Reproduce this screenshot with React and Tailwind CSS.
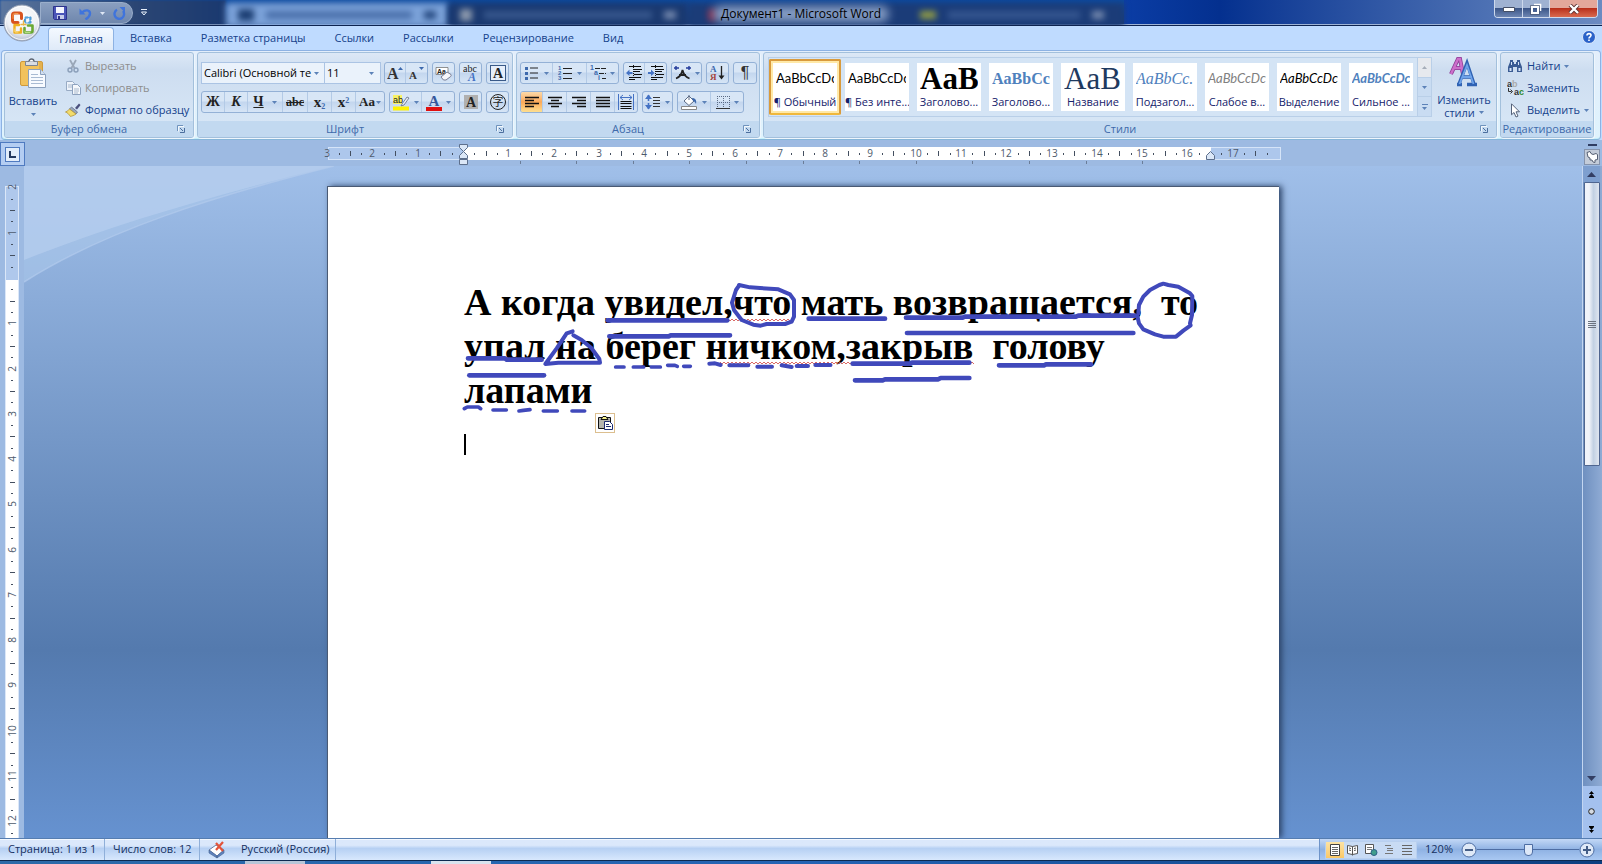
import React from "react";

const UI = "font-['Open_Sans','Noto_Sans',sans-serif]";

/* ---------- small shared parts ---------- */

function Caret({ className = "" }) {
  return (
    <svg width="5" height="3" viewBox="0 0 5 3" className={"shrink-0 " + className} aria-hidden="true">
      <path d="M0 0h5L2.500 3z" fill="#5c82b8" />
    </svg>
  );
}

function Launcher({ label }) {
  return (
    <button type="button" aria-label={label} className="absolute right-1 top-0 flex h-4 w-4 items-center justify-center">
      <svg width="8" height="8" viewBox="0 0 8 8" fill="none" aria-hidden="true">
        <path d="M.5 6V.5H6" stroke="#6f93bd" />
        <path d="M3 3l3 3" stroke="#4c6f9e" />
        <path d="M7.500 3v4.500H3" stroke="#4c6f9e" />
        <path d="M1.500 6.500V1.500H7" stroke="#fff" opacity=".8" />
      </svg>
    </button>
  );
}

function Group({ title, className = "", launcher, children }) {
  return (
    <section
      aria-label={title}
      className={
        "flex h-[86px] flex-col overflow-hidden rounded-[3px] border border-[#a3c0dc] bg-linear-to-b from-[#dce8f6] via-[#cdddf0] via-20% to-[#d9e8f7] shadow-[1px_1px_0_#eef6fd] " +
        className
      }
    >
      <div className="flex min-h-0 flex-1">{children}</div>
      <div className={"relative flex h-4 shrink-0 items-center justify-center bg-[#c2d9f0] text-[11px] text-[#3e6aaa] " + (launcher ? "pr-5" : "")}>
        <span className="whitespace-nowrap">{title}</span>
        {launcher && <Launcher label={launcher} />}
      </div>
    </section>
  );
}

function Strip({ children }) {
  return (
    <div className="flex h-[22px] shrink-0 divide-x divide-[#b3cae6] overflow-hidden rounded-[3px] border border-[#94b1d6] bg-linear-to-b from-[#d8e6f6] from-45% via-[#c3d6ee] via-50% to-[#d6e5f6]">
      {children}
    </div>
  );
}

function Tool({ label, w = "flex-1", caret, active, children }) {
  return (
    <button
      type="button"
      aria-label={label}
      className={
        "flex h-full items-center justify-center gap-1 " +
        w +
        (active ? " bg-linear-to-b from-[#fbd9a8] via-[#fba958] to-[#fddf90]" : "")
      }
    >
      {children}
      {caret && <Caret />}
    </button>
  );
}

/* ---------- icons ---------- */

const Svg = ({ w = 16, h = 16, children }) => (
  <svg width={w} height={h} viewBox={`0 0 ${w} ${h}`} fill="none" aria-hidden="true" className="shrink-0">
    {children}
  </svg>
);

const OfficeLogo = () => (
  <svg width="38" height="38" viewBox="0 0 38 38" aria-hidden="true">
    <defs>
      <radialGradient id="orb" cx=".5" cy=".35" r=".7">
        <stop offset="0" stopColor="#fff" />
        <stop offset=".6" stopColor="#eef0f5" />
        <stop offset="1" stopColor="#a4afc3" />
      </radialGradient>
    </defs>
    <circle cx="19" cy="19" r="18" fill="url(#orb)" stroke="#8f9bb0" />
    <circle cx="19" cy="19" r="16.500" fill="none" stroke="#fff" opacity=".8" />
    <g fill="none" strokeLinecap="round" strokeLinejoin="round">
      <path d="M15 18.500H11.500Q9.500 18.500 9.500 16.500V11Q9.500 9 11.500 9H16.500Q18.500 9 18.500 11V14.500" stroke="#d8541f" strokeWidth="3" />
      <path d="M10 14.500V11Q10 9.500 11.500 9.500H15" stroke="#f39a4c" strokeWidth="1" />
      <path d="M22 17.500V13.500H27.500V18.500H25" stroke="#3d8fd0" strokeWidth="2" strokeDasharray="2 2.600" />
      <path d="M22.500 19V13.500H27V19H23" stroke="#57a5dd" strokeWidth="1.200" />
      <path d="M16 21H11.500V28.500H18V24.500" stroke="#eeb021" strokeWidth="2.400" />
      <path d="M12 25V28H15" stroke="#fbe08a" strokeWidth="1" />
      <path d="M21.500 24V28.500H28Q29.500 28.500 29.500 27V21.500H25" stroke="#69a832" strokeWidth="2.600" />
      <path d="M22 27V28.500H27" stroke="#b5dd7f" strokeWidth="1" />
      <path d="M20.500 17v4M18 20.500h5" stroke="#e9b544" strokeWidth="1.400" />
    </g>
  </svg>
);

const SaveIcon = () => (
  <Svg w={14} h={14}>
    <path d="M.5.5h13v13h-12l-1-1z" fill="#4a55b8" stroke="#2d348c" />
    <path d="M3 1h8v6H3z" fill="#f4f6ff" />
    <path d="M4 9h7v4H4z" fill="#c6ccea" />
    <path d="M5 10h2v3H5z" fill="#2d348c" />
  </Svg>
);
const UndoIcon = () => (
  <Svg w={13} h={13}>
    <path d="M3 5.500C6 2.500 11 2.500 11 6.500c0 3-2.500 4.500-4.500 6" stroke="#3f74dc" strokeWidth="2.400" />
    <path d="M.5 1.500v6h6z" fill="#3f74dc" />
  </Svg>
);
const RedoIcon = () => (
  <Svg w={13} h={13}>
    <path d="M4 2.800A4.800 4.800 0 1 0 10 4" stroke="#3f74dc" strokeWidth="2.400" />
    <path d="M6.500 0H12v5.500z" fill="#3f74dc" />
  </Svg>
);

const PasteIcon = () => (
  <svg width="28" height="32" viewBox="0 0 28 32" fill="none" aria-hidden="true">
    <rect x="1.500" y="4.500" width="22" height="24" rx="1.500" fill="#f2c25c" stroke="#cf9a3c" />
    <path d="M20 5h3v23h-3z" fill="#dba544" opacity=".6" />
    <path d="M6.500 4.500h12v4h-12z" fill="#d9dde4" stroke="#7c8594" />
    <path d="M10 4.500a2.500 2.500 0 0 1 5 0" fill="#fff" stroke="#5f6876" strokeWidth="1.300" />
    <path d="M9.500 12.500h12l5 5v13h-17z" fill="#f8fbff" stroke="#8ba0bd" />
    <path d="M21.500 12.500v5h5" fill="#d3e0f0" stroke="#8ba0bd" />
    <path d="M12 17.500h7M12 20.500h12M12 23.500h12M12 26.500h12" stroke="#a9bbd3" />
  </svg>
);
const CutIcon = () => (
  <Svg w={14} h={14}>
    <path d="M4 1l4.500 8M10 1L5.500 9" stroke="#9aa7b8" strokeWidth="1.800" />
    <circle cx="4" cy="11" r="2" stroke="#8b9fb9" strokeWidth="1.400" />
    <circle cx="10" cy="11" r="2" stroke="#8b9fb9" strokeWidth="1.400" />
  </Svg>
);
const CopyIcon = () => (
  <Svg w={15} h={14}>
    <path d="M.5.5h6l2 2v7h-8z" fill="#eef3fa" stroke="#98abc4" />
    <path d="M2 4h4M2 6h4" stroke="#a9b9cd" />
    <path d="M6.500 3.500h5l3 3v7h-8z" fill="#f5f8fc" stroke="#8da2bf" />
    <path d="M8 8h5M8 10h5M8 12h4" stroke="#a9b9cd" />
  </Svg>
);
const BrushIcon = () => (
  <Svg w={16} h={14}>
    <path d="M10 5l4-4.500 1.500 1.500L12 6.500z" fill="#4a4f7d" />
    <path d="M6.500 4l6 5-1.500 2-6.500-5z" fill="#9aa6ba" stroke="#66718a" strokeWidth=".8" />
    <path d="M4.500 6l6.500 5c-2 1.500-4 2-5.500 2.500C4 11.500 2.500 9.500.5 9 2 8.500 3.500 7.500 4.500 6z" fill="#f3dc6b" stroke="#b3953a" strokeWidth=".8" />
  </Svg>
);

const TextIcon = ({ children, className = "text-[15px]" }) => (
  <span className={"font-['Liberation_Serif',serif] leading-4 text-[#222] " + className}>{children}</span>
);

const GrowA = ({ small }) => (
  <Svg w={16}>
    <text x="0" y="14" fontFamily="Liberation Serif, serif" fontWeight="bold" fontSize={small ? 11 : 16} fill="#333">
      A
    </text>
    {small ? <path d="M10 2h5l-2.500 3z" fill="#3d69ad" /> : <path d="M11 5h5l-2.500-3z" fill="#3d69ad" />}
  </Svg>
);
const ClearIcon = () => (
  <Svg w={17}>
    <path d="M1 2.500h12v7H1z" fill="#fff" stroke="#777" strokeWidth=".8" />
    <text x="2" y="9" fontFamily="Liberation Sans, sans-serif" fontSize="7" fontWeight="bold" fill="#222">
      Aa
    </text>
    <path d="M6 12l6-5 4 2.500c.5 1 0 2-1 2.500l-4 3H8.500z" fill="#f7f7fb" stroke="#777c93" />
  </Svg>
);
const PhoneticIcon = () => (
  <Svg w={16} h={18}>
    <text x="0" y="8" fontFamily="Liberation Serif, serif" fontSize="10" fill="#222">abc</text>
    <text x="5" y="17" fontFamily="Liberation Serif, serif" fontStyle="italic" fontWeight="bold" fontSize="12" fill="#4472c4">A</text>
  </Svg>
);
const BoxA = ({ shaded }) => (
  <Svg w={16} h={16}>
    {shaded ? <rect x="1" y="1" width="14" height="14" fill="#b0b0b0" /> : <rect x=".5" y=".5" width="15" height="15" fill="#e6eefa" stroke="#3a5a88" />}
    <text x="8" y="13" textAnchor="middle" fontFamily="Liberation Serif, serif" fontWeight="bold" fontSize="14" fill="#222">A</text>
  </Svg>
);
const CircleChar = () => (
  <Svg w={18} h={18}>
    <circle cx="9" cy="9" r="7.500" stroke="#222" />
    <text x="9" y="13" textAnchor="middle" fontFamily="Noto Sans CJK SC, sans-serif" fontSize="11" fill="#222">字</text>
  </Svg>
);
const HighlightIcon = () => (
  <Svg w={17} h={17}>
    <path d="M0 1h9v9H0z" fill="#f7f265" />
    <text x="0" y="9" fontFamily="Liberation Sans, sans-serif" fontSize="9" fill="#222">ab</text>
    <path d="M9 10l5-7 2 1-5 7-3 1z" fill="#e8edf6" stroke="#5f6c82" strokeWidth=".8" />
    <path d="M0 12.500h16v4H0z" fill="#fff200" />
  </Svg>
);
const FontColorIcon = () => (
  <Svg w={16} h={17}>
    <text x="8" y="12" textAnchor="middle" fontFamily="Liberation Serif, serif" fontWeight="bold" fontSize="15" fill="#35589c">A</text>
    <path d="M0 13h16v4H0z" fill="#e01010" />
  </Svg>
);

const ListIcon = ({ kind }) => (
  <Svg w={16}>
    {kind === "bullet" && (
      <>
        <path d="M6 3h8M6 8h8M6 13h8" stroke="#222" />
        <path d="M1 2h3v3H1zM1 7h3v3H1zM1 12h3v3H1z" fill="#3d69ad" />
      </>
    )}
    {kind === "number" && (
      <>
        <path d="M6 3.500h9M6 8.500h9M6 13.500h9" stroke="#222" />
        <g fontFamily="Liberation Sans, sans-serif" fontWeight="bold" fontSize="6" fill="#3d69ad">
          <text x="1" y="5">1</text>
          <text x="1" y="10">2</text>
          <text x="1" y="15">3</text>
        </g>
      </>
    )}
    {kind === "multi" && (
      <>
        <path d="M5 3.500h11M9 8.500h7M12 13.500h4" stroke="#222" strokeDasharray="5 1" />
        <g fontFamily="Liberation Sans, sans-serif" fontWeight="bold" fontSize="7" fill="#3d69ad">
          <text x="0" y="5">1</text>
          <text x="4" y="10">a</text>
          <text x="8" y="15">i</text>
        </g>
      </>
    )}
  </Svg>
);
const IndentIcon = ({ right }) => (
  <Svg w={16}>
    <path d="M3 1.500h12M8 4.500h8M8 6.500h6M8 9.500h8M3 12.500h12M3 14.500h6" stroke="#111" />
    <path d="M7.500 0v16" stroke="#111" strokeDasharray="1 1" />
    {right ? <path d="M0 7h3V4.500L6.500 8 3 11V9H0z" fill="#4472c4" /> : <path d="M6.500 7h-3V4.500L0 8l3.500 3V9h3z" fill="#4472c4" />}
  </Svg>
);
const AsianIcon = () => (
  <Svg w={17}>
    <path d="M2 13.500C6 12 8 8 8.500 5 9.500 9 11 12 15.500 13.500M5 10h7" stroke="#222" strokeWidth="1.800" />
    <path d="M0 3h5M2 1v4M12 3h5M15 1v4" stroke="#223a9a" strokeWidth="1.400" />
  </Svg>
);
const SortIcon = () => (
  <Svg w={15}>
    <text x="0" y="7" fontFamily="Liberation Serif, serif" fontWeight="bold" fontSize="9" fill="#3d69ad">А</text>
    <text x="0" y="15" fontFamily="Liberation Serif, serif" fontWeight="bold" fontSize="9" fill="#a5433c">Я</text>
    <path d="M11.500 1v12" stroke="#222" strokeWidth="1.300" />
    <path d="M8.500 10.500h6l-3 4z" fill="#222" />
  </Svg>
);

const LINES = {
  left: ["M1 2.500h14", "M1 5.500h9", "M1 8.500h14", "M1 11.500h9"],
  center: ["M1 2.500h14", "M4 5.500h8", "M1 8.500h14", "M4 11.500h8"],
  right: ["M1 2.500h14", "M6 5.500h9", "M1 8.500h14", "M6 11.500h9"],
  justify: ["M1 2.500h14", "M1 5.500h14", "M1 8.500h14", "M1 11.500h14"],
};
const AlignIcon = ({ kind }) => (
  <Svg w={16} h={14}>
    <path d={LINES[kind].join("")} stroke="#111" strokeWidth="1.400" />
  </Svg>
);
const DistributeIcon = () => (
  <Svg w={16}>
    <path d="M.5 0v16M15.500 0v16" stroke="#4472c4" />
    <path d="M2 3.500h12" stroke="#4472c4" />
    <path d="M5 1L2 3.500 5 6M11 1l3 2.500L11 6" stroke="#4472c4" />
    <path d="M2.500 7.500h11M2.500 9.500h11M2.500 12.500h11M2.500 14.500h11" stroke="#111" />
  </Svg>
);
const SpacingIcon = () => (
  <Svg w={16}>
    <path d="M3.500 1v14" stroke="#4472c4" strokeDasharray="6 2" strokeWidth="1.600" />
    <path d="M0 5l3.500-4.500L7 5zM0 11l3.500 4.500L7 11z" fill="#4472c4" />
    <path d="M8 3.500h7M8 6.500h7M8 9.500h7M8 12.500h7" stroke="#333" />
  </Svg>
);
const FillIcon = () => (
  <Svg w={17}>
    <path d="M3 7l5-5 5 5-5 4.500z" fill="#fff" stroke="#5b6b85" />
    <path d="M8 6V1" stroke="#5b6b85" />
    <path d="M11 4c3 0 5 2 4 6-1-2-2-3-3-3z" fill="#3d69ad" />
    <path d="M.5 12.500h15v3H.5z" fill="#fff" stroke="#888" />
  </Svg>
);
const BorderIcon = () => (
  <Svg w={14} h={15}>
    <path d="M1 1.500h13M1 7.500h13M1.500 1v12M7.500 1v12M13.500 1v12" stroke="#5b6b85" strokeDasharray="1 1" />
    <path d="M0 13.500h14" stroke="#333" />
  </Svg>
);
const StylesIcon = () => (
  <svg width="30" height="30" viewBox="0 0 30 30" fill="none" aria-hidden="true">
    <path d="M2 17L9 2h2l3 15M5 11h8" stroke="#8d3d96" strokeWidth="4" />
    <path d="M2 17L9 2h2l3 15M5 11h8" stroke="#cc6fca" strokeWidth="2.400" />
    <path d="M8 27.500h5M18 27.500h10M10 27L18 6l7 21M13 20h10" stroke="#2f62b3" strokeWidth="3.400" />
    <path d="M10.500 27L18 8l6.500 19M13 20h10" stroke="#6ea3ea" strokeWidth="1.800" />
  </svg>
);
const FindIcon = () => (
  <Svg w={16} h={14}>
    <path d="M3 1h3v2h1v2h2V3h1V1h3v2l2 5v5h-5V8H6v5H1V8l2-5z" fill="#3b5c94" />
    <path d="M2.500 9h2v3h-2zM11.500 9h2v3h-2zM4 3h1v3H4zM11 3h1v3h-1z" fill="#d7e5f8" />
  </Svg>
);
const ReplaceIcon = () => (
  <Svg w={17} h={16}>
    <text x="0" y="7" fontFamily="Liberation Sans, sans-serif" fontWeight="bold" fontSize="9" fill="#333">a<tspan fill="#aaa">b</tspan></text>
    <text x="7" y="15" fontFamily="Liberation Sans, sans-serif" fontWeight="bold" fontSize="9" fill="#333">a<tspan fill="#2d8a2d">c</tspan></text>
    <path d="M1.500 8v3.500h3M3.500 9.500l2 2-2 2" stroke="#333" />
  </Svg>
);
const SelectIcon = () => (
  <Svg w={12} h={15}>
    <path d="M2.500.8v11l2.500-2.300 2 4.500 2-.9-2-4.300h3.500z" fill="#fff" stroke="#55627a" />
  </Svg>
);

const SpellIcon = () => (
  <Svg w={18} h={18}>
    <path d="M1 9l7-5 8 5-7 6z" fill="#fff" stroke="#6d7fa3" />
    <path d="M1 9v3l8 5v-2zM9 17l7-5V9l-7 6z" fill="#5f83bf" stroke="#44618f" strokeWidth=".6" />
    <path d="M8 2l7 8M15 1L8 9" stroke="#e2533a" strokeWidth="2.200" />
  </Svg>
);
const ViewIcon = ({ kind }) => (
  <Svg w={14} h={12}>
    {kind === "print" && (
      <>
        <path d="M2.500.5h9v11h-9z" fill="#fff" stroke="#444" />
        <path d="M4 3.500h6M4 5.500h6M4 7.500h6M4 9.500h6" stroke="#666" />
      </>
    )}
    {kind === "read" && (
      <>
        <path d="M1.500 1.500l5 1 5-1v8l-5 1-5-1z" fill="#fff" stroke="#555" />
        <path d="M6.500 2.500v9M3 4l2 .5M3 6l2 .5M8 4.500l2-.5M8 6.500l2-.5" stroke="#555" />
      </>
    )}
    {kind === "web" && (
      <>
        <path d="M1.500.5h8v9h-8z" fill="#fff" stroke="#555" />
        <path d="M3 3.500h5M3 5.500h5" stroke="#777" />
        <circle cx="10" cy="8.500" r="3" fill="#3f9d8d" stroke="#2b5f86" />
      </>
    )}
    {kind === "outline" && <path d="M3 1.500h6M5 4.500h6M5 6.500h6M3 9.500h8" stroke="#777" />}
    {kind === "draft" && <path d="M2 1.500h10M2 4.500h10M2 7.500h10M2 10.500h10" stroke="#666" />}
  </Svg>
);

/* ---------- title bar ---------- */

function TitleBar() {
  return (
    <header className="relative flex h-[26px] shrink-0 items-start justify-between overflow-hidden border-b border-[#0d2350] bg-linear-to-b from-[#0b4aa0] to-[#1a3970] shadow-[inset_0_-1px_0_#9fb4d6]">
      <div aria-hidden="true" className="absolute inset-0 mb-px flex">
        <div className="h-full w-[226px] bg-linear-to-r from-[#5b769f] via-[#2b4674] via-60% to-[#1a3970] blur-[1px]" />
        <div className="mt-[3px] flex h-full w-[222px] items-center gap-3 bg-[#7ba2d9] px-3 blur-[3px]">
          <span className="h-3 w-4 bg-[#1d3f74]" />
          <span className="h-2 flex-1 bg-[#4a70ab]" />
          <span className="h-2 w-3 bg-[#24477f]" />
        </div>
        <div className="mt-[3px] flex h-full w-[240px] items-center gap-3 bg-[#1a3970] px-3 blur-[3px]">
          <span className="h-3 w-3 bg-[#8b98ac]" />
          <span className="h-2 flex-1 bg-[#36568c]" />
          <span className="h-2 w-3 bg-[#7488ad]" />
        </div>
        <div className="mt-[3px] flex h-full w-[436px] items-center gap-3 bg-[#1b3c78] px-5 blur-[3px]">
          <span className="h-3 w-2 bg-[#7c2b4d]" />
          <span className="w-[180px]" />
          <span className="h-2 w-4 bg-[#8f9a45]" />
          <span className="h-2 flex-1 bg-[#34558f]" />
          <span className="h-2 w-3 bg-[#7488ad]" />
        </div>
        <div className="h-full flex-1 bg-linear-to-r from-[#0b3da5] via-[#04308f] via-20% to-[#6c8bc2]" />
      </div>
      <div className="relative flex items-start pl-10 pt-[2px]">
        <div className="flex h-[22px] w-[93px] items-center gap-3 rounded-r-full border border-[#9aaecb] bg-linear-to-b from-[#8a9fc0] to-[#6f87ad] pl-3">
          <button type="button" aria-label="Сохранить"><SaveIcon /></button>
          <button type="button" aria-label="Отменить" className="flex items-center gap-2">
            <UndoIcon />
            <svg width="5" height="3" viewBox="0 0 5 3" aria-hidden="true"><path d="M0 0h5L2.500 3z" fill="#dfe8f6" /></svg>
          </button>
          <button type="button" aria-label="Повторить" className="-ml-1"><RedoIcon /></button>
        </div>
        <button type="button" aria-label="Настройка панели быстрого доступа" className="ml-2 mt-[7px]">
          <svg width="6" height="7" viewBox="0 0 6 7" fill="none" aria-hidden="true">
            <path d="M0 .5h6" stroke="#e8f0fb" />
            <path d="M.5 3h5L3 6z" stroke="#e8f0fb" />
          </svg>
        </button>
      </div>
      <h1 className="absolute left-1/2 top-1 -translate-x-1/2 whitespace-nowrap text-[12px] leading-5 text-black">
        <span aria-hidden="true" className="absolute -inset-x-2 inset-y-[2px] rounded-full bg-[#b4c6e4]/70 blur-[5px]" />
        <span className="relative">Документ1 - Microsoft Word</span>
      </h1>
      <div className="relative mr-[4px] flex h-[18px] overflow-hidden rounded-b-[4px] border border-t-0 border-[#cdd9ec]">
        <button type="button" aria-label="Свернуть" className="flex w-7 items-center justify-center border-r border-[#cdd9ec] bg-linear-to-b from-[#9fb2d2] from-45% via-[#3c5688] via-50% to-[#6d86b3]">
          <svg width="12" height="6" viewBox="0 0 12 6" aria-hidden="true"><path d="M.5 1.500h11v4H.5z" fill="#fff" stroke="#444f66" /></svg>
        </button>
        <button type="button" aria-label="Восстановить" className="flex w-[27px] items-center justify-center border-r border-[#cdd9ec] bg-linear-to-b from-[#9fb2d2] from-45% via-[#3c5688] via-50% to-[#6d86b3]">
          <svg width="12" height="12" viewBox="0 0 12 12" fill="none" aria-hidden="true">
            <path d="M4 1.500h6.500V8" stroke="#fff" strokeWidth="1.600" />
            <path d="M2 4h6v6H2z" stroke="#fff" strokeWidth="2" />
            <path d="M.5 2.500h9v9h-9z" stroke="#444f66" strokeWidth=".6" />
          </svg>
        </button>
        <button type="button" aria-label="Закрыть" className="flex w-[47px] items-center justify-center bg-linear-to-b from-[#e3a79b] from-45% via-[#b92f1b] via-50% to-[#d9694e]">
          <svg width="12" height="10" viewBox="0 0 12 10" aria-hidden="true">
            <path d="M2 1l8 8M10 1L2 9" stroke="#5a3030" strokeWidth="4" />
            <path d="M2 1l8 8M10 1L2 9" stroke="#fff" strokeWidth="2.400" />
          </svg>
        </button>
      </div>
    </header>
  );
}

/* ---------- tabs ---------- */

const TABS = ["Вставка", "Разметка страницы", "Ссылки", "Рассылки", "Рецензирование", "Вид"];

function Tabs() {
  return (
    <nav className="flex h-6 shrink-0 items-end bg-[#bfdbff] pl-12 text-[11px] text-[#15428b]">
      <button type="button" className="flex h-[23px] w-[66px] items-center justify-center rounded-t-[4px] border border-b-0 border-[#8db2e3] bg-linear-to-b from-[#f4f9ff] to-[#dfeaf8]">
        Главная
      </button>
      <div className="flex h-[23px] items-center gap-[29px] pl-4">
        {TABS.map((t) => (
          <button key={t} type="button" className="whitespace-nowrap">{t}</button>
        ))}
      </div>
      <button type="button" aria-label="Справка" className="mb-[6px] ml-auto mr-[6px]">
        <svg width="14" height="14" viewBox="0 0 14 14" fill="none" aria-hidden="true">
          <circle cx="7" cy="7" r="6.500" fill="#2b62c9" stroke="#dfe9f8" />
          <path d="M5 5.500C5 3 9 3 9 5.300 9 6.800 7 6.800 7 8.500M7 9.500v1.500" stroke="#fff" strokeWidth="1.600" />
        </svg>
      </button>
    </nav>
  );
}

/* ---------- ribbon ---------- */

const STYLES = [
  { name: "¶ Обычный", sample: "AaBbCcDc", cls: "font-['Lato',sans-serif] text-[13px] text-black", active: true },
  { name: "¶ Без инте...", sample: "AaBbCcDc", cls: "font-['Lato',sans-serif] text-[13px] text-black" },
  { name: "Заголово...", sample: "AaB", cls: "font-['Liberation_Serif',serif] text-[31px] font-bold text-black" },
  { name: "Заголово...", sample: "AaBbCc", cls: "font-['Liberation_Serif',serif] text-[16px] font-bold text-[#4f81bd]" },
  { name: "Название", sample: "AaB", cls: "font-['Liberation_Serif',serif] text-[31px] text-[#1f3a5f]" },
  { name: "Подзагол...", sample: "AaBbCc.", cls: "font-['Liberation_Serif',serif] text-[16px] italic text-[#4f81bd]" },
  { name: "Слабое в...", sample: "AaBbCcDc", cls: "font-['Lato',sans-serif] text-[13px] italic text-[#808080]" },
  { name: "Выделение", sample: "AaBbCcDc", cls: "font-['Lato',sans-serif] text-[13px] italic text-black" },
  { name: "Сильное ...", sample: "AaBbCcDc", cls: "font-['Lato',sans-serif] text-[13px] font-bold italic text-[#4f81bd]" },
];

function StyleCell({ item }) {
  return (
    <button
      type="button"
      className={
        "flex h-14 w-[72px] shrink-0 items-center justify-center rounded-[2px] " +
        (item.active ? "border-2 border-[#d99a3c] border-b-[#f0b83c] bg-[#ffe9a8]" : "")
      }
    >
      <span className="flex h-12 w-16 flex-col overflow-hidden bg-white">
        <span className={"mx-[3px] flex h-8 items-center overflow-hidden whitespace-nowrap " + item.cls}>{item.sample}</span>
        <span className="h-4 whitespace-nowrap text-center text-[11px] leading-[14px] text-[#15226b]">{item.name}</span>
      </span>
    </button>
  );
}

function Ribbon() {
  return (
    <div className="mx-px flex h-[90px] shrink-0 gap-[3px] rounded-[4px] border border-[#8db2e3] border-b-[#86b5d8] bg-linear-to-b from-[#e3eefb] to-[#dff3fd] py-px pl-[2px] pr-[6px] shadow-[inset_0_-1px_0_#c5f0fb]">
      <Group title="Буфер обмена" className="w-[190px] shrink-0" launcher="Параметры буфера обмена">
        <button type="button" className="flex w-[56px] shrink-0 flex-col items-center pt-1 text-[11px] leading-4 text-[#15428b]">
          <PasteIcon />
          <span className="pt-1">Вставить</span>
          <Caret className="mt-1" />
        </button>
        <div className="flex flex-col pl-1 pt-[2px] text-[11px]">
          <button type="button" disabled className="flex h-[22px] items-center gap-1 text-[#8d8d8d]">
            <span className="flex w-4 justify-center"><CutIcon /></span>Вырезать
          </button>
          <button type="button" disabled className="flex h-[22px] items-center gap-1 text-[#8d8d8d]">
            <span className="flex w-4 justify-center"><CopyIcon /></span>Копировать
          </button>
          <button type="button" className="flex h-[22px] items-center gap-1 whitespace-nowrap text-[#15428b]">
            <span className="flex w-4 justify-center"><BrushIcon /></span>Формат по образцу
          </button>
        </div>
      </Group>

      <Group title="Шрифт" className="w-[316px] shrink-0" launcher="Параметры шрифта">
        <div className="flex flex-col gap-[7px] pl-[3px] pt-[9px]">
          <div className="flex h-[22px]">
            <label className="flex h-full w-[124px] items-center border border-[#abc4e4] bg-[#eaf2fb] pl-[2px]">
              <span className="sr-only">Шрифт</span>
              <input defaultValue="Calibri (Основной те" className="h-4 w-[110px] bg-transparent text-[11px] text-black outline-none" />
              <Caret />
            </label>
            <label className="mr-[3px] flex h-full w-[56px] items-center border border-l-0 border-[#abc4e4] bg-[#eaf2fb] pl-[2px]">
              <span className="sr-only">Размер шрифта</span>
              <input defaultValue="11" className="h-4 w-[42px] bg-transparent text-[11px] text-black outline-none" />
              <Caret />
            </label>
            <div className="flex gap-1">
              <Strip>
                <Tool label="Увеличить размер" w="w-[21px]"><GrowA /></Tool>
                <Tool label="Уменьшить размер" w="w-[21px]"><GrowA small /></Tool>
              </Strip>
              <Strip><Tool label="Очистить формат" w="w-[21px]"><ClearIcon /></Tool></Strip>
              <Strip><Tool label="Фонетическое руководство" w="w-[21px]"><PhoneticIcon /></Tool></Strip>
              <Strip><Tool label="Граница знака" w="w-[21px]"><BoxA /></Tool></Strip>
            </div>
          </div>
          <div className="flex gap-1">
            <Strip>
              <Tool label="Полужирный" w="w-[23px]"><TextIcon className="text-[14px] font-bold">Ж</TextIcon></Tool>
              <Tool label="Курсив" w="w-[23px]"><TextIcon className="text-[14px] font-bold italic">К</TextIcon></Tool>
              <Tool label="Подчеркнутый" w="w-[35px]" caret><TextIcon className="mr-1 text-[14px] font-bold underline">Ч</TextIcon></Tool>
              <Tool label="Зачеркнутый" w="w-[25px]"><TextIcon className="text-[12px] font-bold line-through">abc</TextIcon></Tool>
              <Tool label="Подстрочный знак" w="w-[24px]">
                <TextIcon className="text-[15px] font-bold">x<sub className="text-[8px] text-[#3d69ad]">2</sub></TextIcon>
              </Tool>
              <Tool label="Надстрочный знак" w="w-[24px]">
                <TextIcon className="text-[15px] font-bold">x<sup className="text-[8px] text-[#3d69ad]">2</sup></TextIcon>
              </Tool>
              <Tool label="Регистр" w="w-[28px]" caret><TextIcon className="-mr-[3px] text-[13px] font-bold">Aa</TextIcon></Tool>
            </Strip>
            <Strip>
              <Tool label="Цвет выделения текста" w="w-[32px]" caret><HighlightIcon /></Tool>
              <Tool label="Цвет текста" w="w-[32px]" caret><FontColorIcon /></Tool>
            </Strip>
            <Strip><Tool label="Затенение знака" w="w-[21px]"><BoxA shaded /></Tool></Strip>
            <Strip><Tool label="Знак в круге" w="w-[21px]"><CircleChar /></Tool></Strip>
          </div>
        </div>
      </Group>

      <Group title="Абзац" className="w-[244px] shrink-0" launcher="Параметры абзаца">
        <div className="flex flex-col gap-[7px] pl-[3px] pt-[9px]">
          <div className="flex gap-1">
            <Strip>
              <Tool label="Маркеры" w="w-[32px]" caret><ListIcon kind="bullet" /></Tool>
              <Tool label="Нумерация" w="w-[34px]" caret><ListIcon kind="number" /></Tool>
              <Tool label="Многоуровневый список" w="w-[31px]" caret><ListIcon kind="multi" /></Tool>
            </Strip>
            <Strip>
              <Tool label="Уменьшить отступ" w="w-[21px]"><IndentIcon /></Tool>
              <Tool label="Увеличить отступ" w="w-[21px]"><IndentIcon right /></Tool>
            </Strip>
            <Strip><Tool label="Азиатская верстка" w="w-[29px]" caret><AsianIcon /></Tool></Strip>
            <Strip><Tool label="Сортировка" w="w-[21px]"><SortIcon /></Tool></Strip>
            <Strip><Tool label="Отобразить все знаки" w="w-[22px]"><span className="font-['Liberation_Sans',sans-serif] text-[16px] leading-4 text-[#333]">¶</span></Tool></Strip>
          </div>
          <div className="flex gap-1">
            <Strip>
              <Tool label="По левому краю" w="w-[22px]" active><AlignIcon kind="left" /></Tool>
              <Tool label="По центру" w="w-[24px]"><AlignIcon kind="center" /></Tool>
              <Tool label="По правому краю" w="w-[24px]"><AlignIcon kind="right" /></Tool>
              <Tool label="По ширине" w="w-[24px]"><AlignIcon kind="justify" /></Tool>
              <Tool label="Распределить" w="w-[22px]"><DistributeIcon /></Tool>
            </Strip>
            <Strip><Tool label="Междустрочный интервал" w="w-[29px]" caret><SpacingIcon /></Tool></Strip>
            <Strip>
              <Tool label="Заливка" w="w-[33px]" caret><FillIcon /></Tool>
              <Tool label="Границы" w="w-[32px]" caret><BorderIcon /></Tool>
            </Strip>
          </div>
        </div>
      </Group>

      <Group title="Стили" className="min-w-0 flex-1" launcher="Параметры стилей">
        <div className="ml-1 mt-1 flex h-[60px] min-w-0 flex-1 border border-[#b9cfe8] bg-[#d4e4f5]">
          <div className="flex min-w-0 flex-1 items-center overflow-hidden">
            {STYLES.map((s, i) => <StyleCell key={i} item={s} />)}
          </div>
          <div className="flex w-[14px] shrink-0 flex-col divide-y divide-[#b9cfe8] border-l border-[#b9cfe8]">
            <button type="button" aria-label="Строка выше" className="flex flex-1 items-center justify-center bg-[#e6e9ee]">
              <svg width="5" height="3" viewBox="0 0 5 3" aria-hidden="true"><path d="M0 3h5L2.500 0z" fill="#a5adb9" /></svg>
            </button>
            <button type="button" aria-label="Строка ниже" className="flex flex-1 items-center justify-center bg-[#c9dcf2]"><Caret /></button>
            <button type="button" aria-label="Все стили" className="flex flex-1 flex-col items-center justify-center gap-[2px] bg-[#c9dcf2]">
              <span className="h-px w-[6px] bg-[#5c82b8]" />
              <Caret />
            </button>
          </div>
        </div>
        <button type="button" className="flex w-16 shrink-0 flex-col items-center pt-1 text-[11px] leading-[13px] text-[#15428b]">
          <StylesIcon />
          <span className="pt-[6px]">Изменить</span>
          <span className="flex items-center gap-1">стили <Caret /></span>
        </button>
      </Group>

      <Group title="Редактирование" className="w-[94px] shrink-0">
        <div className="flex flex-col pl-[6px] pt-[2px] text-[11px] text-[#15428b]">
          <button type="button" className="flex h-[22px] items-center gap-1"><span className="flex w-4 justify-center"><FindIcon /></span>Найти <Caret /></button>
          <button type="button" className="flex h-[22px] items-center gap-1"><span className="flex w-4 justify-center"><ReplaceIcon /></span>Заменить</button>
          <button type="button" className="flex h-[22px] items-center gap-1"><span className="flex w-4 justify-center"><SelectIcon /></span>Выделить <Caret /></button>
        </div>
      </Group>
    </div>
  );
}

/* ---------- rulers ---------- */

const CM = 45.27;
const range = (a, b) => Array.from({ length: b - a + 1 }, (_, i) => a + i);

function HorizontalRuler() {
  const zero = 135;
  return (
    <svg viewBox="0 0 954 22" className="mx-auto h-[22px] w-[954px] shrink-0 overflow-visible" role="img" aria-label="Горизонтальная линейка">
      <rect x=".5" y="4.500" width="952" height="12" fill="#adc7ec" stroke="#d5e4f8" />
      <rect x={zero} y="4" width="748" height="13" fill="#fff" />
      {range(-12, 71).map((q) => {
        const x = Math.round(zero + (q * CM) / 4);
        if (x > 942 || q === 0 || q === 66) return null;
        if (q % 4 === 0)
          return (
            <text key={q} x={x} y="14" textAnchor="middle" fontSize="10" fill="#4d5a6c" fontFamily="Open Sans, sans-serif">
              {Math.abs(q / 4)}
            </text>
          );
        return <rect key={q} x={x} y={q % 2 ? 10 : 8} width="1" height={q % 2 ? 2 : 5} fill="#444f60" />;
      })}
      {range(1, 12).map((i) => (
        <rect key={i} x={Math.round(zero + i * 56.6)} y="18" width="1" height="3" fill="#6b7d98" />
      ))}
      <g fill="#dbe7f7" stroke="#5d6f8c">
        <path d="M131.500 1.500h8v3l-4 4-4-4z" />
        <path d="M131.500 15.500v-3l4-4 4 4v3z" />
        <path d="M131.500 16.500h8v5h-8z" />
        <path d="M878.500 16.500v-4l4-4 4 4v4z" />
      </g>
    </svg>
  );
}

function VerticalRuler() {
  const zero = 112;
  return (
    <div className="flex w-6 shrink-0 justify-center overflow-hidden bg-[#9dbae2]">
      <svg width="14" height="672" viewBox="0 0 14 672" className="shrink-0" role="img" aria-label="Вертикальная линейка">
        <rect x=".5" y="20.500" width="13" height="700" fill="#afc8ec" stroke="#dbe7f8" />
        <rect x="1" y="114" width="12" height="600" fill="#fff" />
        {range(-8, 49).map((q) => {
          const y = Math.round(zero + (q * CM) / 4);
          if (q === 0) return null;
          if (q % 4 === 0)
            return (
              <text key={q} transform={`translate(11 ${y}) rotate(-90)`} textAnchor="middle" fontSize="10" fill="#4d5a6c" fontFamily="Open Sans, sans-serif">
                {Math.abs(q / 4)}
              </text>
            );
          return <rect key={q} x={q % 2 ? 6 : 5} y={y} width={q % 2 ? 2 : 5} height="1" fill="#444f60" />;
        })}
      </svg>
    </div>
  );
}

/* ---------- document ---------- */

const zig = (x0, x1, y) => {
  let d = `M${x0} ${y}`;
  for (let x = x0 + 2, up = true; x <= x1; x += 2, up = !up) d += `L${x} ${up ? y + 2 : y}`;
  return d;
};

function Marks() {
  return (
    <svg viewBox="328 187 952 300" className="pointer-events-none absolute left-0 top-0 h-[300px] w-[952px]" fill="none" aria-hidden="true">
      <g stroke="#d0453f" strokeWidth=".8">
        <path d={zig(728, 790, 319)} />
        <path d={zig(720, 974, 362)} />
      </g>
      <g stroke="#4049bb" strokeWidth="14" strokeLinecap="round" strokeLinejoin="round">
        <g transform="translate(440 260) scale(.33333)">
          <path d="M503 181H862" />
          <path d="M508 229H686L692 226H870" />
          <path d="M897 77L888 90L876 128L882 150L905 180L940 194L962 197L980 192H1035L1055 185L1062 170V120L1050 103L1015 88L960 84L930 82L897 75" strokeWidth="12" />
          <path d="M1106 176H1335" />
          <path d="M84 295H195L200 299H305" />
          <path d="M88 346H312" />
          <path d="M398 214L380 220L350 265L316 312L355 308H480L478 297L455 265L425 240L400 226" strokeWidth="12" />
          <path d="M527 321H552M580 321H611M634 321H661M683 316H705L712 319M731 319H751" strokeWidth="11" />
          <path d="M808 311L825 310L842 315M868 316H925M952 320H996M1025 316L1042 319L1055 321M1070 318H1104M1126 315H1170" strokeWidth="12" />
          <path d="M73 446L82 441H115L122 446M159 450H199M237 453L250 451L270 449M310 453H352M396 453H434" strokeWidth="11" />
        </g>
        <g transform="translate(820 260) scale(.33333)">
          <path d="M258 173H428L435 170H768L775 167H945" />
          <path d="M261 219H940" />
          <path d="M955 160L957 135L970 110L990 90L1018 75L1030 71L1045 75L1075 80L1110 100L1117 108L1116 165L1110 190L1112 196L1090 212L1068 230H1030L1005 223L970 208L957 190L952 168" strokeWidth="12" />
          <path d="M-3 315H32" strokeWidth="11" />
          <path d="M98 311H270L276 308H448" />
          <path d="M105 361H188L195 358H355L362 354H448" />
          <path d="M537 316H672L678 313H813" />
        </g>
      </g>
    </svg>
  );
}

function Page() {
  return (
    <article className="relative mx-auto mt-5 h-[calc(100%-20px)] w-[952px] border-l border-t border-[#4a5a74] bg-white pl-[136px] pt-[93px] shadow-[3px_0_6px_#2c4469]">
      <p className="whitespace-pre font-['Liberation_Serif','Times_New_Roman',serif] text-[38px] font-bold leading-[44px] text-black">
        {"А когда увидел,что мать возвращается,  то\nупал на берег ничком,закрыв  голову\nлапами"}
      </p>
      <span aria-hidden="true" className="mt-[22px] block h-[21px] w-[2px] bg-black" />
      <Marks />
      <button type="button" aria-label="Параметры вставки" className="absolute left-[267px] top-[226px] flex h-5 w-5 items-center justify-center border border-[#dcbf8f] bg-white">
        <Svg>
          <path d="M1.500 2.500h12v11h-12z" fill="#b5b5ae" stroke="#111" />
          <path d="M4 4.500l2-3h3l2 3z" fill="#f5f08a" stroke="#111" />
          <path d="M7.500 6.500h5l3 3v5h-8z" fill="#fff" stroke="#1c2a70" />
          <path d="M9 9.500h3M9 11.500h5" stroke="#1c2a70" />
        </Svg>
      </button>
    </article>
  );
}

function Scrollbar() {
  return (
    <div className="flex w-5 shrink-0 flex-col border-l border-[#c3d6f1] bg-linear-to-r from-[#6f90c0] to-[#8fabd4] pr-[2px]">
      <button type="button" aria-label="Прокрутить вверх" className="flex h-4 items-center justify-center bg-[#7e9fcf]">
        <svg width="9" height="5" viewBox="0 0 9 5" aria-hidden="true"><path d="M0 5h9L4.500 0z" fill="#333e63" /></svg>
      </button>
      <div className="ml-px flex h-[284px] items-center justify-center rounded-[1px] border border-[#4f6690] bg-linear-to-r from-[#f0f3f9] from-30% via-[#c2d1e3] via-60% to-[#dfe6f0]">
        <div className="flex flex-col gap-px">
          <span className="h-px w-2 bg-[#6c7480]" />
          <span className="h-px w-2 bg-[#6c7480]" />
          <span className="h-px w-2 bg-[#6c7480]" />
          <span className="h-px w-2 bg-[#6c7480]" />
        </div>
      </div>
      <div className="flex-1" />
      <button type="button" aria-label="Прокрутить вниз" className="flex h-4 items-center justify-center">
        <svg width="9" height="5" viewBox="0 0 9 5" aria-hidden="true"><path d="M0 0h9L4.500 5z" fill="#333e63" /></svg>
      </button>
      <div className="-mr-[2px] flex h-[52px] shrink-0 flex-col items-center justify-around bg-[#a4c1ee] pr-[3px]">
        <button type="button" aria-label="Предыдущая страница">
          <svg width="5" height="7" viewBox="0 0 5 7" aria-hidden="true"><path d="M0 3L2.500 0 5 3zM0 6L2.500 3 5 6zM0 6h5v1H0z" fill="#000" /></svg>
        </button>
        <button type="button" aria-label="Выбор объекта перехода">
          <svg width="7" height="7" viewBox="0 0 7 7" aria-hidden="true"><circle cx="3.500" cy="3.500" r="2.800" fill="#d6dbe2" stroke="#222" /></svg>
        </button>
        <button type="button" aria-label="Следующая страница">
          <svg width="5" height="7" viewBox="0 0 5 7" aria-hidden="true"><path d="M0 4l2.500 3L5 4zM0 1l2.500 3L5 1zM0 0h5v1H0z" fill="#000" /></svg>
        </button>
      </div>
    </div>
  );
}

function Workspace() {
  return (
    <div className="flex min-h-0 flex-1 flex-col">
      <div className="flex h-[26px] shrink-0 bg-[#9dbae2]">
        <button type="button" aria-label="Тип табуляции" className="mt-[2px] flex h-6 w-[25px] shrink-0 items-center justify-center border border-[#4f7ac0] bg-[#b4cdf2]">
          <span className="flex h-[15px] w-[15px] items-center justify-center border border-[#4f7ac0] bg-[#e3edfa]">
            <svg width="7" height="7" viewBox="0 0 7 7" aria-hidden="true"><path d="M0 0h2v5h5v2H0z" fill="#24385e" /></svg>
          </span>
        </button>
        <div className="flex min-w-0 flex-1 justify-center pt-[3px]"><HorizontalRuler /></div>
        <div className="flex w-[18px] shrink-0 flex-col items-center gap-[3px] pr-[2px] pt-1">
          <span className="h-[2px] w-[9px] bg-[#2f3d63]" />
          <button type="button" aria-label="Линейка" className="flex h-4 w-4 items-center justify-center border border-[#8593ac] bg-[#c4ccd9]">
            <svg width="12" height="12" viewBox="0 0 12 12" aria-hidden="true"><path d="M1 1.500l3-1 1 2 2 1 3-1 1.500 1v5L9 9v2.500L7 11 6 9H4V7L2 6z" fill="#fff" stroke="#555f73" /></svg>
          </button>
        </div>
      </div>
      <div className="flex min-h-0 flex-1">
        <VerticalRuler />
        <main className="relative min-w-0 flex-1 overflow-hidden bg-linear-to-b from-[#a0bfe9] via-[#547aae] via-72% to-[#6692d0]">
          <svg width="310" height="118" viewBox="0 0 310 118" className="absolute left-0 top-0" aria-hidden="true">
            <path d="M0 0H310C190 30 80 65 0 116z" fill="#a9c6ea" opacity=".65" />
            <path d="M0 0H310C200 26 90 58 0 94z" fill="#b8d0ef" opacity=".65" />
            <path d="M310 0C190 30 80 65 0 116" fill="none" stroke="#b2cbed" strokeWidth="1.500" opacity=".7" />
          </svg>
          <Page />
        </main>
        <Scrollbar />
      </div>
    </div>
  );
}

/* ---------- status bar ---------- */

function StatusBar() {
  return (
    <footer className="flex h-[22px] shrink-0 items-stretch border-t border-[#567db0] bg-linear-to-b from-[#dbe8fb] from-30% via-[#b6d0f3] via-45% to-[#d8e8fd] text-[11px] text-[#15305f] shadow-[inset_0_1px_0_#f3f8ff]">
      <div className="flex w-[105px] items-center whitespace-nowrap border-r border-[#8fafd9] pl-2">Страница: 1 из 1</div>
      <div className="flex w-[95px] items-center whitespace-nowrap border-r border-[#8fafd9] pl-2">Число слов: 12</div>
      <button type="button" aria-label="Правописание" className="flex w-[33px] items-center justify-center"><SpellIcon /></button>
      <div className="flex w-[103px] items-center whitespace-nowrap border-r border-[#8fafd9] pl-2">Русский (Россия)</div>
      <div className="ml-auto flex items-center border-l border-[#6f94c9] bg-linear-to-b from-[#c3d8f6] via-[#8fb2e3] via-50% to-[#a9c8f2] pl-[5px] pr-[7px]">
        <div className="flex h-[18px] w-[92px] border border-[#b9d0ef] bg-[#c8dbf4]">
          {["print", "read", "web", "outline", "draft"].map((k, i) => (
            <button
              key={k}
              type="button"
              aria-label={["Разметка страницы", "Режим чтения", "Веб-документ", "Структура", "Черновик"][i]}
              className={"flex flex-1 items-center justify-center " + (i === 0 ? "bg-linear-to-b from-[#fce3a4] to-[#fbc865]" : "")}
            >
              <ViewIcon kind={k} />
            </button>
          ))}
        </div>
        <button type="button" className="w-[44px] text-center">120%</button>
        <button type="button" aria-label="Уменьшить" className="flex">
          <svg width="16" height="16" viewBox="0 0 16 16" aria-hidden="true"><circle cx="8" cy="8" r="7" fill="#dfe9f7" stroke="#4d6da3" /><path d="M4 7h8v2H4z" fill="#445d86" /></svg>
        </button>
        <input
          type="range"
          aria-label="Масштаб"
          min="0"
          max="100"
          defaultValue="50"
          className="h-4 w-[102px] appearance-none bg-[linear-gradient(#4d6da3,#4d6da3)] bg-[length:100%_1px] bg-center bg-no-repeat [&::-webkit-slider-thumb]:h-3 [&::-webkit-slider-thumb]:w-[9px] [&::-webkit-slider-thumb]:appearance-none [&::-webkit-slider-thumb]:rounded-b-[4px] [&::-webkit-slider-thumb]:border [&::-webkit-slider-thumb]:border-[#4d6da3] [&::-webkit-slider-thumb]:bg-[#dde8f8]"
        />
        <button type="button" aria-label="Увеличить" className="flex">
          <svg width="16" height="16" viewBox="0 0 16 16" aria-hidden="true"><circle cx="8" cy="8" r="7" fill="#dfe9f7" stroke="#4d6da3" /><path d="M4 7h3V4h2v3h3v2H9v3H7V9H4z" fill="#445d86" /></svg>
        </button>
      </div>
    </footer>
  );
}

export default function App() {
  return (
    <div className={"relative flex h-screen flex-col overflow-hidden bg-[#bfdbff] " + UI}>
      <TitleBar />
      <Tabs />
      <Ribbon />
      <Workspace />
      <StatusBar />
      <div aria-hidden="true" className="flex h-1 shrink-0 border-t border-[#0c2a50] bg-linear-to-r from-[#2c6aa8] via-[#2463b4] to-[#0d3f80]">
        <span className="ml-[245px] w-[60px] bg-[#b7c6d8]" />
        <span className="ml-[126px] w-[60px] bg-[#d9e3ee]" />
      </div>
      <button type="button" aria-label="Кнопка Office" className="absolute left-[3px] top-1">
        <OfficeLogo />
      </button>
    </div>
  );
}
